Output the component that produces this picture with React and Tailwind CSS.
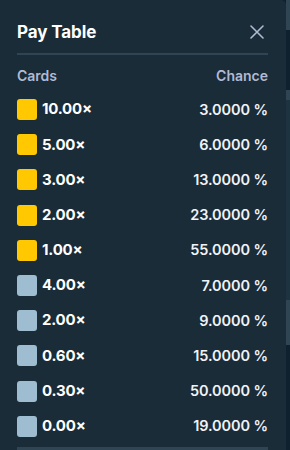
import React from 'react';

// ---------------------------------------------------------------------------
// Pay table data
// ---------------------------------------------------------------------------
const ROWS = [
  { mult: '10.00×', chance: '3.0000', gold: true },
  { mult: '5.00×', chance: '6.0000', gold: true },
  { mult: '3.00×', chance: '13.0000', gold: true },
  { mult: '2.00×', chance: '23.0000', gold: true },
  { mult: '1.00×', chance: '55.0000', gold: true },
  { mult: '4.00×', chance: '7.0000', gold: false },
  { mult: '2.00×', chance: '9.0000', gold: false },
  { mult: '0.60×', chance: '15.0000', gold: false },
  { mult: '0.30×', chance: '50.0000', gold: false },
  { mult: '0.00×', chance: '19.0000', gold: false },
];

const FONT = { fontFamily: 'Inter, Lato, sans-serif' };

function CloseIcon() {
  return (
    <svg width="14" height="14" viewBox="0 0 14 14" fill="none">
      <path d="M1 1L13 13M13 1L1 13" stroke="#b1bad3" strokeWidth="1.6" strokeLinecap="round" />
    </svg>
  );
}

export default function App() {
  return (
    <div className="flex h-[450px] w-[290px] overflow-hidden bg-[#0f212e]" style={FONT}>
      {/* Panel */}
      <div className="flex h-full w-[286px] flex-col rounded-tr-[5px] bg-[#1a2c38] pl-[17px] pr-[18px] pt-[20px]">
        <div className="flex h-[24px] items-center justify-between">
          <h2 className="text-[17px] font-bold leading-6 tracking-[-0.1px] text-white">Pay Table</h2>
          <button className="mr-[4px] flex items-center">
            <CloseIcon />
          </button>
        </div>

        <div className="mt-[9px] h-[2px] bg-[#2f4553]" />

        <div className="mt-[10px] flex h-[20px] items-center justify-between text-[14px] font-semibold text-[#b1bad3]">
          <span>Cards</span>
          <span>Chance</span>
        </div>

        <div className="mt-[7px] flex flex-col">
          {ROWS.map((row, i) => (
            <div key={i} className="flex h-[35.2px] items-center justify-between">
              <div className="flex items-center gap-[5px]">
                <div
                  className={`h-[21px] w-[20px] rounded-[3px] ${
                    row.gold ? 'bg-[#ffc800]' : 'bg-[#9fbdd0]'
                  }`}
                />
                <span className="text-[15px] font-bold tracking-[-0.2px] text-white">{row.mult}</span>
              </div>
              <span className="text-[14.5px] font-semibold tracking-[-0.1px] text-[#f0f3f7]">
                {row.chance} %
              </span>
            </div>
          ))}
        </div>

        <div className="mt-[3px] h-[3px] bg-[#2f4553]" />
      </div>

      {/* Backdrop strip behind the panel */}
      <div className="flex h-full w-[4px] flex-col">
        <div className="h-[30px] bg-[#2f4553]" />
        <div className="h-[60px] bg-[#0f212e]" />
        <div className="h-[10px] bg-[#2f4553]" />
        <div className="h-[200px] bg-[#1e3340]" />
        <div className="h-[45px] bg-[#2f4553]" />
        <div className="flex-1 bg-[#0f212e]" />
      </div>
    </div>
  );
}
